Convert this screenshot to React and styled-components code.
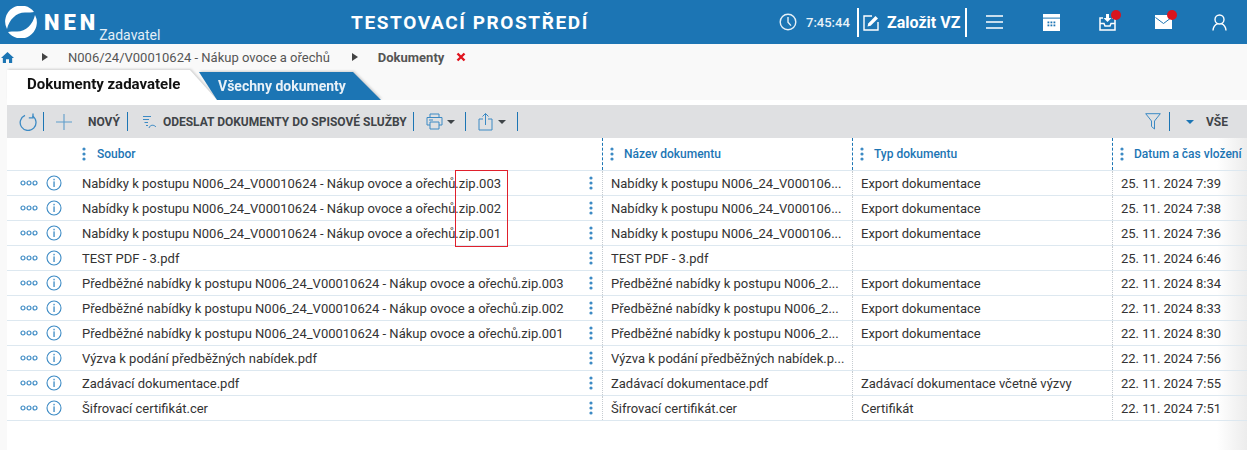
import React from 'react'
import styled, { createGlobalStyle } from 'styled-components'

const GlobalStyle = createGlobalStyle`
  html, body {
    margin: 0;
    padding: 0;
    background: #f9f9f9;
    font-family: Roboto, "Liberation Sans", sans-serif;
    overflow: hidden;
  }
`

const BLUE = '#1c75b4'
const ICON = '#3c8ac4'

const Page = styled.div`
  width: 1247px;
  height: 450px;
  overflow: hidden;
  background: #f9f9f9;
`

const Header = styled.header`
  height: 44px;
  background: ${BLUE};
  display: flex;
  align-items: center;
  color: #fff;
`

const Brand = styled.div`
  width: 300px;
  box-sizing: border-box;
  display: flex;
  align-items: flex-start;
  padding-left: 5px;
  height: 44px;
`

const LogoSvg = styled.svg`
  margin-top: 6px;
  flex: none;
`

const BrandName = styled.span`
  font-family: Roboto, sans-serif;
  font-weight: 900;
  font-size: 22px;
  letter-spacing: 4px;
  margin: 10px 0 0 7px;
  line-height: 26px;
`

const BrandRole = styled.span`
  font-size: 14px;
  margin: 27px 0 0 0;
  line-height: 16px;
  color: #e4eff7;
`

const EnvTitle = styled.div`
  width: 290px;
  font-size: 19px;
  font-weight: 700;
  letter-spacing: 1.6px;
  text-align: center;
  margin-left: 25px;
  white-space: nowrap;
`

const HeaderRight = styled.div`
  margin-left: auto;
  display: flex;
  align-items: center;
  height: 44px;
`

const Clock = styled.div`
  display: flex;
  align-items: center;
  gap: 9px;
  font-size: 13px;
  font-weight: 500;
  width: 78px;
  color: #e9f2f8;
`

const CreateBtn = styled.div`
  height: 29px;
  width: 110px;
  box-sizing: border-box;
  border-left: 2px solid #fff;
  border-right: 2px solid #fff;
  display: flex;
  align-items: center;
  gap: 7px;
  padding-left: 4px;
  font-size: 16px;
  font-weight: 700;
  white-space: nowrap;
`

const HeaderIcon = styled.div`
  position: relative;
  width: 56px;
  height: 24px;
  display: flex;
  align-items: center;
  justify-content: center;
`

const Dot = styled.span`
  position: absolute;
  top: 0;
  left: 32px;
  width: 10px;
  height: 10px;
  border-radius: 50%;
  background: #d9141e;
`

const Breadcrumb = styled.nav`
  height: 26px;
  display: flex;
  align-items: center;
  font-size: 13px;
  color: #555;
  white-space: nowrap;
`

const HomeSvg = styled.svg`
  margin-left: 1px;
`

const Crumb = styled.span`
  font-weight: ${p => (p.$current ? 700 : 400)};
  margin-right: ${p => (p.$current ? 12 : 22)}px;
`

const CrumbArrow = styled.span`
  width: 0;
  height: 0;
  border-left: 6px solid #444;
  border-top: 4px solid transparent;
  border-bottom: 4px solid transparent;
  margin: ${p => p.$m};
`

const Main = styled.main`
  margin-left: 7px;
`

const Tabs = styled.div`
  height: 30px;
  display: flex;
  align-items: flex-start;
`

const TabShadow = styled.div`
  filter: drop-shadow(1px -1px 1px rgba(0, 0, 0, 0.16));
  margin-left: ${p => p.$overlap || 0}px;
  margin-top: ${p => p.$top || 0}px;
`

const ActiveTab = styled.div`
  width: 210px;
  height: 30px;
  background: #fff;
  clip-path: polygon(0 0, 183px 0, 100% 100%, 0 100%);
  font-size: 15px;
  font-weight: 700;
  color: #111;
  line-height: 29px;
  padding-left: 20px;
  box-sizing: border-box;
`

const OtherTab = styled.div`
  width: 182px;
  height: 28px;
  background: ${BLUE};
  clip-path: polygon(0 0, 154px 0, 100% 100%, 18px 100%);
  font-size: 14px;
  font-weight: 700;
  color: #e8f1f8;
  line-height: 29px;
  padding-left: 19px;
  box-sizing: border-box;
`

const Sheet = styled.div`
  position: relative;
  background: #fff;
  padding-top: 5px;
  height: 345px;
`

const RightFade = styled.div`
  position: absolute;
  top: 38px;
  right: 0;
  bottom: 0;
  width: 30px;
  background: linear-gradient(90deg, rgba(236, 236, 236, 0), #ececec);
`

const Toolbar = styled.div`
  height: 33px;
  background: #dfe0e2;
  display: flex;
  align-items: center;
  padding-left: 12px;
  color: #3f4448;
  font-size: 12px;
  font-weight: 700;
  white-space: nowrap;
`

const ToolLabel = styled.span`
  margin: ${p => p.$m || '0'};
`

const ToolIcon = styled.span`
  display: flex;
  margin-left: ${p => p.$left || 0}px;
`

const Sep = styled.span`
  width: 1px;
  height: 19px;
  background: ${BLUE};
  margin: ${p => p.$m || '0'};
`

const Spacer = styled.span`
  flex: 1;
`

const Caret = styled.span`
  width: 0;
  height: 0;
  border-top: 4.5px solid ${p => p.$color || '#3f4448'};
  border-left: 4px solid transparent;
  border-right: 4px solid transparent;
  margin: ${p => p.$m || '0'};
`

const TableWrap = styled.div`
  position: relative;
`

const columns = '595px 250px 260px 135px'

const HeadRow = styled.div`
  display: grid;
  grid-template-columns: ${columns};
  height: 33px;
  border-bottom: 1px solid #dde8f0;
  box-sizing: border-box;
`

const HeadCell = styled.div`
  display: flex;
  align-items: center;
  gap: ${p => (p.$first ? 11 : 10)}px;
  padding-left: ${p => (p.$first ? 75 : 7)}px;
  font-size: 12px;
  font-weight: 500;
  color: ${BLUE};
  white-space: nowrap;
  overflow: hidden;
  border-left: ${p => (p.$first ? 'none' : `1px dashed ${BLUE}`)};
`

const Row = styled.div`
  display: grid;
  grid-template-columns: ${columns};
  height: 25px;
  border-bottom: 1px solid #dde8f0;
  box-sizing: border-box;
`

const Cell = styled.div`
  display: flex;
  align-items: center;
  font-size: 13px;
  color: #333;
  white-space: nowrap;
  overflow: hidden;
  padding-left: 8px;
  border-left: 1px dotted #c6ccd1;
`

const FileCell = styled(Cell)`
  padding-left: 13px;
  border-left: none;
`

const FileName = styled.span`
  margin-left: 20px;
  flex: 1;
`

const RedBox = styled.div`
  position: absolute;
  left: 448px;
  top: 32px;
  width: 53px;
  height: 77px;
  box-sizing: border-box;
  border: 1px solid #e0202c;
  pointer-events: none;
`

const DotsSvg = styled.svg`
  flex: none;
  margin-right: ${p => p.$right || 0}px;
`

const InfoSvg = styled.svg`
  flex: none;
  margin-left: 8px;
`

const RingsSvg = styled.svg`
  flex: none;
`

const CloseSvg = styled.svg`
  flex: none;
`

const VDots = ({ right }) => (
  <DotsSvg width="4" height="14" viewBox="0 0 4 14" $right={right}>
    <circle cx="2" cy="2" r="1.6" fill={ICON} />
    <circle cx="2" cy="7" r="1.6" fill={ICON} />
    <circle cx="2" cy="12" r="1.6" fill={ICON} />
  </DotsSvg>
)

const RowIcons = () => (
  <>
    <RingsSvg width="18" height="6" viewBox="0 0 18 6">
      {[3, 9, 15].map(x => (
        <circle key={x} cx={x} cy="3" r="2" fill="none" stroke={ICON} strokeWidth="1.2" />
      ))}
    </RingsSvg>
    <InfoSvg width="16" height="16" viewBox="0 0 16 16">
      <circle cx="8" cy="8" r="7" fill="none" stroke={ICON} strokeWidth="1.1" />
      <rect x="7.4" y="3.8" width="1.3" height="1.5" fill={ICON} />
      <rect x="7.4" y="6.4" width="1.3" height="5.6" fill={ICON} />
    </InfoSvg>
  </>
)

const HomeIcon = () => (
  <HomeSvg width="13" height="13" viewBox="0 0 12 12">
    <path d="M6 1 L12 6.4 H10.3 V11 H7.4 V7.6 H4.6 V11 H1.7 V6.4 H0 Z" fill={BLUE} />
  </HomeSvg>
)

const DeleteX = () => (
  <CloseSvg width="10" height="10" viewBox="0 0 10 10">
    <path d="M1.5 1.5 L8.5 8.5 M8.5 1.5 L1.5 8.5" stroke="#e0141e" strokeWidth="2.4" />
  </CloseSvg>
)

const logoArc = 'M29 6 A16 16 0 0 0 2 23 C4 14 11 6.5 20 6.5 C24 6.5 27 6.5 29 6 Z'

const Logo = () => (
  <LogoSvg width="32" height="32" viewBox="0 0 32 32">
    <path d={logoArc} fill="#fff" />
    <path d={logoArc} fill="#fff" transform="rotate(180 16 16)" />
  </LogoSvg>
)

const ClockIcon = () => (
  <svg width="18" height="18" viewBox="0 0 18 18">
    <circle cx="9" cy="9" r="7.8" fill="none" stroke="#e6f0f7" strokeWidth="1.4" />
    <path d="M9 4 V9.2 L12 12.6" fill="none" stroke="#e6f0f7" strokeWidth="1.4" />
  </svg>
)

const EditIcon = () => (
  <svg width="17" height="17" viewBox="0 0 17 17">
    <path d="M9 2 H1 V16 H15 V8" fill="none" stroke="#fff" strokeWidth="1.4" />
    <path d="M4.5 12.5 L5.2 9.5 L12.5 2 L15 4.5 L7.6 11.8 Z" fill="#fff" />
  </svg>
)

const MenuIcon = () => (
  <svg width="18" height="16" viewBox="0 0 18 16">
    <path d="M0 2 H17 M0 8 H17 M0 14 H17" stroke="#fff" strokeWidth="1.4" />
  </svg>
)

const CalendarIcon = () => (
  <svg width="17" height="17" viewBox="0 0 17 17">
    <path d="M0 0 H17 V17 H0 Z" fill="#fff" />
    <rect x="0" y="3.6" width="17" height="1" fill={BLUE} />
    {[7.5, 10.5].map(y =>
      [4.5, 7.5, 10.5].map(x => <rect key={`${x}-${y}`} x={x} y={y} width="1.8" height="1.8" fill={BLUE} />)
    )}
  </svg>
)

const InboxIcon = () => (
  <svg width="17" height="18" viewBox="0 0 17 18">
    <path d="M4 5 H1 V17 H16 V5 H13" fill="none" stroke="#fff" strokeWidth="1.5" />
    <path d="M1 10.5 H5 L6 13 H11 L12 10.5 H16" fill="none" stroke="#fff" strokeWidth="1.5" />
    <path d="M7 1 H10 V5 H12.5 L8.5 9 L4.5 5 H7 Z" fill="#fff" />
  </svg>
)

const MailIcon = () => (
  <svg width="17" height="14" viewBox="0 0 17 14">
    <rect width="17" height="14" fill="#fff" />
    <path d="M0.5 2.5 L8.5 8.5 L16.5 2.5" fill="none" stroke={BLUE} strokeWidth="1" />
  </svg>
)

const UserIcon = () => (
  <svg width="15" height="17" viewBox="0 0 15 17">
    <circle cx="7.5" cy="5.5" r="4.5" fill="none" stroke="#fff" strokeWidth="1.4" />
    <path d="M1 16.5 C1.2 12.5 3.5 10.5 5.5 9.6 M14 16.5 C13.8 12.5 11.5 10.5 9.5 9.6" fill="none" stroke="#fff" strokeWidth="1.4" />
  </svg>
)

const RefreshIcon = () => (
  <svg width="18" height="18" viewBox="0 0 18 18">
    <path d="M6 2.3 A7.9 7.9 0 1 0 13.5 3" fill="none" stroke={ICON} strokeWidth="1.3" />
    <path d="M14 0.6 V4.8 H9.8" fill="none" stroke={ICON} strokeWidth="1.3" />
  </svg>
)

const PlusIcon = () => (
  <svg width="16" height="16" viewBox="0 0 16 16">
    <path d="M8 0 V16 M0 8 H16" stroke="#5f9dcb" strokeWidth="1.1" />
  </svg>
)

const SendIcon = () => (
  <svg width="15" height="15" viewBox="0 0 15 15">
    <path d="M1 2.5 H9 M1 5.5 H7 M2.5 8.5 H6 M4 11.5 H6" stroke={ICON} strokeWidth="1" />
    <path d="M7 14 C8 10.5 12 10.5 14 13" fill="none" stroke={ICON} strokeWidth="1" />
  </svg>
)

const PrintIcon = () => (
  <svg width="17" height="17" viewBox="0 0 17 17">
    <path d="M4 4 V1 H13 V4 M4 12 H1 V4.5 H16 V12 H13 M4 9 H13 V16 H4 Z" fill="none" stroke={ICON} strokeWidth="1" />
    <path d="M3 7 H7" stroke={ICON} strokeWidth="1" />
  </svg>
)

const ShareIcon = () => (
  <svg width="15" height="19" viewBox="0 0 15 19">
    <path d="M5 7 H1 V18 H14 V7 H10" fill="none" stroke={ICON} strokeWidth="1" />
    <path d="M7.5 13 V1.5 M4.5 4.5 L7.5 1.5 L10.5 4.5" fill="none" stroke={ICON} strokeWidth="1" />
  </svg>
)

const FunnelIcon = () => (
  <svg width="16" height="17" viewBox="0 0 16 17">
    <path d="M0.7 0.7 H15.3 L9.5 8 V16 L6.5 13.5 V8 Z" fill="none" stroke={ICON} strokeWidth="1" />
  </svg>
)

const offer = 'Nabídky k postupu N006_24_V00010624 - Nákup ovoce a ořechů.zip'
const pre = 'Předběžné nabídky k postupu N006_24_V00010624 - Nákup ovoce a ořechů.zip'
const offerShort = 'Nabídky k postupu N006_24_V000106...'
const preShort = 'Předběžné nabídky k postupu N006_2...'
const exportType = 'Export dokumentace'

const rows = [
  [`${offer}.003`, offerShort, exportType, '25. 11. 2024 7:39'],
  [`${offer}.002`, offerShort, exportType, '25. 11. 2024 7:38'],
  [`${offer}.001`, offerShort, exportType, '25. 11. 2024 7:36'],
  ['TEST PDF - 3.pdf', 'TEST PDF - 3.pdf', '', '25. 11. 2024 6:46'],
  [`${pre}.003`, preShort, exportType, '22. 11. 2024 8:34'],
  [`${pre}.002`, preShort, exportType, '22. 11. 2024 8:33'],
  [`${pre}.001`, preShort, exportType, '22. 11. 2024 8:30'],
  ['Výzva k podání předběžných nabídek.pdf', 'Výzva k podání předběžných nabídek.p...', '', '22. 11. 2024 7:56'],
  ['Zadávací dokumentace.pdf', 'Zadávací dokumentace.pdf', 'Zadávací dokumentace včetně výzvy', '22. 11. 2024 7:55'],
  ['Šifrovací certifikát.cer', 'Šifrovací certifikát.cer', 'Certifikát', '22. 11. 2024 7:51']
]

const App = () => (
  <Page>
    <GlobalStyle />
    <Header>
      <Brand>
        <Logo />
        <BrandName>NEN</BrandName>
        <BrandRole>Zadavatel</BrandRole>
      </Brand>
      <EnvTitle>TESTOVACÍ PROSTŘEDÍ</EnvTitle>
      <HeaderRight>
        <Clock><ClockIcon />7:45:44</Clock>
        <CreateBtn><EditIcon />Založit VZ</CreateBtn>
        <HeaderIcon><MenuIcon /></HeaderIcon>
        <HeaderIcon><CalendarIcon /></HeaderIcon>
        <HeaderIcon><InboxIcon /><Dot /></HeaderIcon>
        <HeaderIcon><MailIcon /><Dot /></HeaderIcon>
        <HeaderIcon><UserIcon /></HeaderIcon>
      </HeaderRight>
    </Header>
    <Breadcrumb>
      <HomeIcon />
      <CrumbArrow $m="0 20px 0 28px" />
      <Crumb>N006/24/V00010624 - Nákup ovoce a ořechů</Crumb>
      <CrumbArrow $m="0 20px 0 0" />
      <Crumb $current>Dokumenty</Crumb>
      <DeleteX />
    </Breadcrumb>
    <Main>
      <Tabs>
        <TabShadow><ActiveTab>Dokumenty zadavatele</ActiveTab></TabShadow>
        <TabShadow $overlap={-18} $top={2}><OtherTab>Všechny dokumenty</OtherTab></TabShadow>
      </Tabs>
      <Sheet>
        <RightFade />
        <Toolbar>
          <RefreshIcon />
          <Sep $m="0 0 0 6px" />
          <ToolIcon $left={12}><PlusIcon /></ToolIcon>
          <ToolLabel $m="0 0 0 16px">NOVÝ</ToolLabel>
          <Sep $m="0 14px 0 7px" />
          <SendIcon />
          <ToolLabel $m="0 0 0 6px">ODESLAT DOKUMENTY DO SPISOVÉ SLUŽBY</ToolLabel>
          <Sep $m="0 12px 0 6px" />
          <PrintIcon />
          <Caret $m="0 0 0 4px" />
          <Sep $m="0 12px 0 10px" />
          <ShareIcon />
          <Caret $m="0 0 0 5px" />
          <Sep $m="0 0 0 11px" />
          <Spacer />
          <FunnelIcon />
          <Sep $m="0 0 0 8px" />
          <Caret $color={BLUE} $m="0 0 0 16px" />
          <ToolLabel $m="0 19px 0 12px">VŠE</ToolLabel>
        </Toolbar>
        <TableWrap>
          <HeadRow>
            <HeadCell $first><VDots />Soubor</HeadCell>
            <HeadCell><VDots />Název dokumentu</HeadCell>
            <HeadCell><VDots />Typ dokumentu</HeadCell>
            <HeadCell><VDots />Datum a čas vložení</HeadCell>
          </HeadRow>
          {rows.map(r => (
            <Row key={r[0]}>
              <FileCell>
                <RowIcons />
                <FileName>{r[0]}</FileName>
                <VDots right={9} />
              </FileCell>
              <Cell>{r[1]}</Cell>
              <Cell>{r[2]}</Cell>
              <Cell>{r[3]}</Cell>
            </Row>
          ))}
          <RedBox />
        </TableWrap>
      </Sheet>
    </Main>
  </Page>
)

export default App
